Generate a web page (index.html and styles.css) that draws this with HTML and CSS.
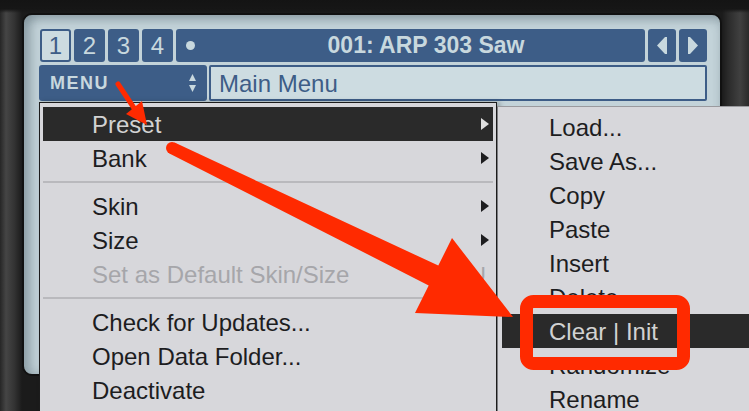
FILE: index.html
```html
<!DOCTYPE html>
<html lang="en">
<head>
    <meta charset="UTF-8">
    <meta name="viewport" content="width=device-width, initial-scale=1.0">
    <title>Main Menu</title>
    <link rel="stylesheet" href="styles.css">
</head>
<body>
    <div class="device">
        <div class="screen">
            <div class="toprow">
                <div class="tab active">1</div>
                <div class="tab">2</div>
                <div class="tab">3</div>
                <div class="tab">4</div>
                <div class="preset-bar">
                    <span class="dot"></span>
                    <span class="preset-name">001: ARP 303 Saw</span>
                </div>
                <div class="nav">
                    <svg width="10" height="17" viewBox="0 0 10 17"><polygon points="0,8.5 8,0 10,0 10,17 8,17" fill="#c8d8de"/></svg>
                </div>
                <div class="nav">
                    <svg width="10" height="17" viewBox="0 0 10 17"><polygon points="10,8.5 2,0 0,0 0,17 2,17" fill="#c8d8de"/></svg>
                </div>
            </div>
            <div class="menurow">
                <div class="menu-select">
                    <span>MENU</span>
                    <svg width="7" height="18" viewBox="0 0 7 18"><polygon points="3.5,0 7,7 0,7" fill="#c8d8de"/><polygon points="0,11 7,11 3.5,18" fill="#c8d8de"/></svg>
                </div>
                <div class="menu-field">Main Menu</div>
            </div>
        </div>

        <div class="popup main-menu">
            <div class="item hl">Preset<span class="arrow"></span></div>
            <div class="item">Bank<span class="arrow"></span></div>
            <div class="sep"></div>
            <div class="item">Skin<span class="arrow"></span></div>
            <div class="item">Size<span class="arrow"></span></div>
            <div class="item disabled">Set as Default Skin/Size<span class="shortcut">U</span></div>
            <div class="sep"></div>
            <div class="item">Check for Updates...</div>
            <div class="item">Open Data Folder...</div>
            <div class="item">Deactivate</div>
        </div>

        <div class="popup submenu">
            <div class="item">Load...</div>
            <div class="item">Save As...</div>
            <div class="item">Copy</div>
            <div class="item">Paste</div>
            <div class="item">Insert</div>
            <div class="item">Delete</div>
            <div class="item hl">Clear | Init</div>
            <div class="item">Randomize</div>
            <div class="item">Rename</div>
        </div>

        <svg class="annotations" width="749" height="411" viewBox="0 0 749 411">
            <line x1="118" y1="84" x2="134" y2="108" stroke="#ff2a00" stroke-width="5" stroke-linecap="round"/>
            <polygon points="126,114 142,101 147,125" fill="#ff2a00"/>
            <circle cx="172" cy="148" r="6" fill="#ff2a00"/>
            <polygon points="174.6,142.6 438.3,265.6 452,238 513,317 415,313 428.7,285.4 169.4,153.4" fill="#ff2a00"/>
            <rect x="526.5" y="301.5" width="157" height="62" rx="7" fill="none" stroke="#ff2a00" stroke-width="13"/>
        </svg>
    </div>
</body>
</html>
```

FILE: styles.css
```css
* {
    margin: 0;
    padding: 0;
    box-sizing: border-box;
}

body {
    background: #161616;
    overflow: hidden;
    font-family: "Liberation Sans", Arial, sans-serif;
}

.device {
    position: relative;
    width: 749px;
    height: 411px;
    overflow: hidden;
    padding-top: 13px;
    background:
        linear-gradient(180deg, #141414 0, #161616 9px, rgba(30,30,30,0) 13px),
        linear-gradient(90deg, #262626 0, #454545 6px, #343434 14px, #1b1b1b 22px, #1b1b1b 722px, #2a2a2a 728px, #404040 740px, #2a2a2a 749px);
}

.screen {
    width: 700px;
    height: 363px;
    margin-left: 22px;
    border: 2px solid #111;
    border-radius: 10px;
    background: #c3d3d9;
    box-shadow: inset 8px 0 10px rgba(40,60,70,0.25), inset 0 6px 8px rgba(40,60,70,0.2);
    padding: 14px 13px 0 16px;
}

.toprow {
    display: flex;
    gap: 3px;
    height: 33px;
}

.tab {
    width: 31px;
    background: #3d5d87;
    color: #c8d8de;
    border-radius: 3px;
    font-size: 24px;
    display: flex;
    align-items: center;
    justify-content: center;
}

.tab.active {
    background: #ccdbe0;
    color: #3d5d87;
    box-shadow: inset 0 0 0 2px #3d5d87;
}

.preset-bar {
    flex: 1;
    display: flex;
    align-items: center;
    background: #3d5d87;
    border-radius: 3px;
}

.dot {
    width: 9px;
    height: 9px;
    border-radius: 50%;
    background: #c8d8de;
    margin-left: 10px;
}

.preset-name {
    flex: 1;
    text-align: center;
    padding-left: 12px;
    font-size: 23px;
    font-weight: bold;
    color: #c8d8de;
}

.nav {
    width: 28px;
    background: #3d5d87;
    border-radius: 3px;
    display: flex;
    align-items: center;
    justify-content: center;
}

.menurow {
    display: flex;
    gap: 2px;
    margin-top: 3px;
    height: 36px;
}

.menu-select {
    width: 168px;
    margin-left: -1px;
    background: #3d5d87;
    border-radius: 3px;
    display: flex;
    align-items: center;
    justify-content: space-between;
    padding: 0 11px 0 11px;
    color: #c8d8de;
    font-size: 18px;
    font-weight: bold;
    letter-spacing: 1.5px;
}

.menu-field {
    flex: 1;
    border: 2px solid #3d5d87;
    border-radius: 2px;
    background: #cddce1;
    color: #3d5d87;
    font-size: 24px;
    line-height: 33px;
    padding-left: 8px;
}

.popup {
    position: absolute;
    background: #d7d7db;
    font-size: 24px;
    line-height: 34px;
    color: #1d1d1f;
}

.main-menu {
    left: 39px;
    top: 102px;
    width: 458px;
    height: 330px;
    border: 1px solid #1c1c1c;
    padding: 4px 3px;
    box-shadow: 3px 0 5px rgba(0,0,0,0.25);
}

.submenu {
    left: 497px;
    top: 106px;
    width: 260px;
    height: 320px;
    border-left: 1px solid #7e7e82;
    border-top: 1px solid #9a9a9e;
    padding: 3px 0 0 4px;
}

.item {
    height: 34px;
    display: flex;
    align-items: center;
    justify-content: space-between;
    padding: 2px 4px 0 49px;
    white-space: nowrap;
}

.submenu .item {
    padding-left: 47px;
}

.item.hl {
    background: #2a2a2a;
    color: #d2d2d2;
}

.item.disabled {
    color: #a6a6aa;
}

.arrow {
    width: 0;
    height: 0;
    margin-top: -2px;
    border-left: 8px solid #1d1d1f;
    border-top: 6px solid transparent;
    border-bottom: 6px solid transparent;
}

.item.hl .arrow {
    border-left-color: #e0e0e0;
}

.shortcut {
    font-size: 22px;
    padding-right: 3px;
}

.sep {
    height: 14px;
    display: flex;
    align-items: center;
}

.sep::before {
    content: "";
    flex: 1;
    height: 2px;
    background: #b9b9bd;
}

.annotations {
    position: absolute;
    top: 0;
    left: 0;
    pointer-events: none;
}
```
